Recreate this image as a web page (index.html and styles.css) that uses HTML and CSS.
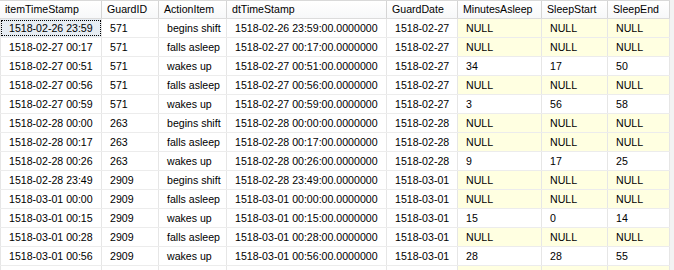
FILE: index.html
```html
<!DOCTYPE html>
<html>
<head>
<meta charset="utf-8">
<link rel="stylesheet" href="styles.css">
</head>
<body>
<div class="grid">
  <div class="row head">
    <div class="c">itemTimeStamp</div><div class="c">GuardID</div><div class="c">ActionItem</div><div class="c">dtTimeStamp</div><div class="c">GuardDate</div><div class="c">MinutesAsleep</div><div class="c">SleepStart</div><div class="c">SleepEnd</div>
  </div>
  <div class="row"><div class="c focus">1518-02-26 23:59</div><div class="c">571</div><div class="c">begins shift</div><div class="c">1518-02-26 23:59:00.0000000</div><div class="c">1518-02-27</div><div class="c null">NULL</div><div class="c null">NULL</div><div class="c null">NULL</div></div>
  <div class="row"><div class="c">1518-02-27 00:17</div><div class="c">571</div><div class="c">falls asleep</div><div class="c">1518-02-27 00:17:00.0000000</div><div class="c">1518-02-27</div><div class="c null">NULL</div><div class="c null">NULL</div><div class="c null">NULL</div></div>
  <div class="row"><div class="c">1518-02-27 00:51</div><div class="c">571</div><div class="c">wakes up</div><div class="c">1518-02-27 00:51:00.0000000</div><div class="c">1518-02-27</div><div class="c">34</div><div class="c">17</div><div class="c">50</div></div>
  <div class="row"><div class="c">1518-02-27 00:56</div><div class="c">571</div><div class="c">falls asleep</div><div class="c">1518-02-27 00:56:00.0000000</div><div class="c">1518-02-27</div><div class="c null">NULL</div><div class="c null">NULL</div><div class="c null">NULL</div></div>
  <div class="row"><div class="c">1518-02-27 00:59</div><div class="c">571</div><div class="c">wakes up</div><div class="c">1518-02-27 00:59:00.0000000</div><div class="c">1518-02-27</div><div class="c">3</div><div class="c">56</div><div class="c">58</div></div>
  <div class="row"><div class="c">1518-02-28 00:00</div><div class="c">263</div><div class="c">begins shift</div><div class="c">1518-02-28 00:00:00.0000000</div><div class="c">1518-02-28</div><div class="c null">NULL</div><div class="c null">NULL</div><div class="c null">NULL</div></div>
  <div class="row"><div class="c">1518-02-28 00:17</div><div class="c">263</div><div class="c">falls asleep</div><div class="c">1518-02-28 00:17:00.0000000</div><div class="c">1518-02-28</div><div class="c null">NULL</div><div class="c null">NULL</div><div class="c null">NULL</div></div>
  <div class="row"><div class="c">1518-02-28 00:26</div><div class="c">263</div><div class="c">wakes up</div><div class="c">1518-02-28 00:26:00.0000000</div><div class="c">1518-02-28</div><div class="c">9</div><div class="c">17</div><div class="c">25</div></div>
  <div class="row"><div class="c">1518-02-28 23:49</div><div class="c">2909</div><div class="c">begins shift</div><div class="c">1518-02-28 23:49:00.0000000</div><div class="c">1518-03-01</div><div class="c null">NULL</div><div class="c null">NULL</div><div class="c null">NULL</div></div>
  <div class="row"><div class="c">1518-03-01 00:00</div><div class="c">2909</div><div class="c">falls asleep</div><div class="c">1518-03-01 00:00:00.0000000</div><div class="c">1518-03-01</div><div class="c null">NULL</div><div class="c null">NULL</div><div class="c null">NULL</div></div>
  <div class="row"><div class="c">1518-03-01 00:15</div><div class="c">2909</div><div class="c">wakes up</div><div class="c">1518-03-01 00:15:00.0000000</div><div class="c">1518-03-01</div><div class="c">15</div><div class="c">0</div><div class="c">14</div></div>
  <div class="row"><div class="c">1518-03-01 00:28</div><div class="c">2909</div><div class="c">falls asleep</div><div class="c">1518-03-01 00:28:00.0000000</div><div class="c">1518-03-01</div><div class="c null">NULL</div><div class="c null">NULL</div><div class="c null">NULL</div></div>
  <div class="row"><div class="c">1518-03-01 00:56</div><div class="c">2909</div><div class="c">wakes up</div><div class="c">1518-03-01 00:56:00.0000000</div><div class="c">1518-03-01</div><div class="c">28</div><div class="c">28</div><div class="c">55</div></div>
  <div class="row"><div class="c"></div><div class="c"></div><div class="c"></div><div class="c"></div><div class="c"></div><div class="c null"></div><div class="c null"></div><div class="c null"></div></div>
</div>
</body>
</html>
```
FILE: styles.css
```css
html, body {
  margin: 0;
  padding: 0;
  height: 270px;
  overflow: hidden;
  background: #f3f3f3;
}
body {
  font-family: "Liberation Sans", Arial, sans-serif;
  font-size: 10.6px;
  color: #000;
}
.grid {
  width: 670px;
  background: #fff;
}
.row {
  display: grid;
  grid-template-columns: 102px 57px 68px 160px 71px 84px 66px 62px;
  height: 19px;
  box-sizing: border-box;
  border-bottom: 1px solid #ececec;
}
.row .c {
  box-sizing: border-box;
  border-right: 1px solid #e6e6e6;
  padding: 1px 0 0 8px;
  line-height: 17px;
  white-space: nowrap;
  overflow: hidden;
}
.row .c:first-child {
  border-left: 1px solid #e6e6e6;
}
.head {
  border-top: 1px solid #d9d9d9;
  border-bottom: 1px solid #dcdcdc;
  background: linear-gradient(#ffffff, #f7f8f9);
}
.head .c {
  padding: 0 0 0 5px;
  border-right: 1px solid #d5d5d5;
}
.head .c:first-child {
  border-left: none;
}
.null {
  background: #ffffe1;
}
.row .focus {
  background: #e6ecf2;
  outline: 1px dotted #000;
  outline-offset: -2px;
}
```
